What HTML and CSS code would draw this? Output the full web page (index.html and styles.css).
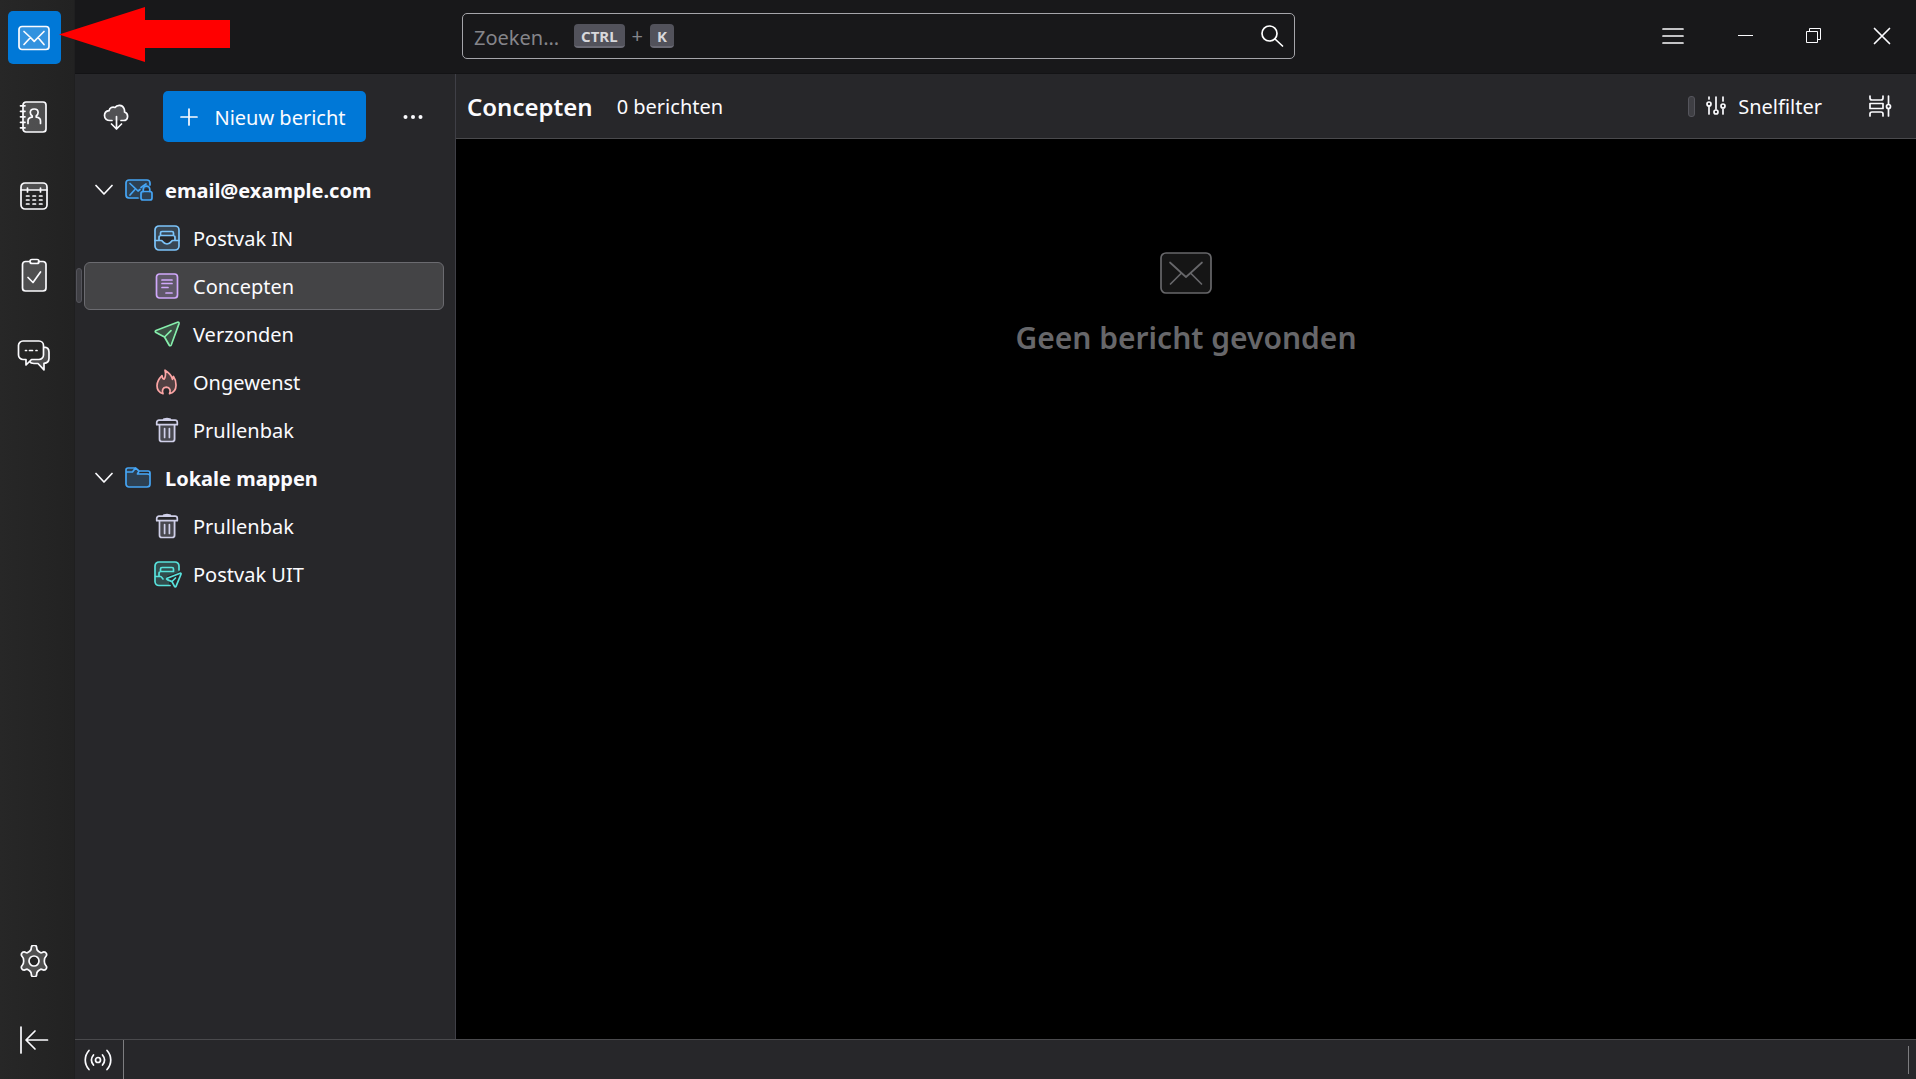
FILE: index.html
```html
<!DOCTYPE html>
<html lang="nl">
<head>
<meta charset="utf-8">
<meta name="viewport" content="width=device-width, initial-scale=1">
<title>Concepten</title>
<link rel="stylesheet" href="styles.css">
</head>
<body class="app">
<svg class="sprite" aria-hidden="true">
  <symbol id="trash" viewBox="0 0 26 26">
    <path class="tint" d="M4 7.500h18v14.500a3 3 0 0 1-3 3h-11a3 3 0 0 1-3-3V7.500z"/>
    <path d="M5.500 8v14.200a2.300 2.300 0 0 0 2.300 2.300h10.400a2.300 2.300 0 0 0 2.300-2.300V8M5 3.200h16a2.300 2.300 0 0 1 2.300 2.300V7.700H2.700V5.500A2.300 2.300 0 0 1 5 3.200zM9.500 2.500c.5-1.300 6.500-1.300 7 0M10.600 11.500v9M15.400 11.500v9"/>
  </symbol>
  <symbol id="chevron" viewBox="0 0 18 12"><path d="M1 1.500l8 8.500 8-8.500"/></symbol>
</svg>

<nav class="rail" aria-label="Ruimten">
  <button class="rail-button active" aria-label="E-mail">
    <svg class="icon" width="32" height="32" viewBox="0 0 32 32"><rect class="tint" x="1" y="4.500" width="30" height="23" rx="3"/><rect x="1" y="4.500" width="30" height="23" rx="3"/><path d="M6 9.500l6.500 6 3.700 3.800 3.800-3.800 6-6M6 22.500l6.500-7M26 22.500l-6-7"/></svg>
  </button>
  <button class="rail-button" aria-label="Adresboek">
    <svg class="icon" width="32" height="32" viewBox="0 0 32 32"><rect class="tint" x="5" y="1" width="23" height="30" rx="3"/><rect x="5" y="1" width="23" height="30" rx="3"/><path d="M2.500 4.800h4.500M2.500 10.300h4.500M2.500 15.800h4.500M2.500 21.300h4.500M2.500 26.800h4.500M10 22.500v-2.500c0-2.300 2-3.500 4.200-3.800v-1.200c-1.500-1-1.900-2.200-1.900-3.500 0-2.200 1.700-3.500 3.900-3.500s3.900 1.300 3.900 3.500c0 1.300-.4 2.500-1.900 3.500v1.200c2.200.3 4.300 1.500 4.300 3.800v2.500"/></svg>
  </button>
  <button class="rail-button" aria-label="Agenda">
    <svg class="icon" width="32" height="32" viewBox="0 0 32 32"><path class="tint" d="M3 10V7a4 4 0 0 1 4-4h18a4 4 0 0 1 4 4v3z"/><rect x="3" y="3" width="26" height="26" rx="4"/><path d="M3 10h26M9.500 8v4M22.500 8v4"/><path d="M8.500 16h2.500M15 16h2.500M21.500 16h2.500M8.500 20h2.500M15 20h2.500M21.500 20h2.500M8.500 24h2.500M15 24h2.500M21.500 24h2.500"/></svg>
  </button>
  <button class="rail-button" aria-label="Taken">
    <svg class="icon" width="32" height="34" viewBox="0 0 32 34"><rect class="tint" x="4.500" y="3.500" width="23.500" height="29.500" rx="3"/><path d="M12 3.500H7.500a3 3 0 0 0-3 3V30a3 3 0 0 0 3 3H25a3 3 0 0 0 3-3V6.500a3 3 0 0 0-3-3h-4.500M14 1.500h5a1.500 1.500 0 0 1 0 4h-5a1.500 1.500 0 0 1 0-4zM10 19.500l5 5L22.500 14"/></svg>
  </button>
  <button class="rail-button" aria-label="Chat">
    <svg class="icon" width="34" height="38" viewBox="0 -4 34 38"><path class="tint" d="M27 8.500c3 0 5 2 5 5v5.500c0 3-2 4.500-5 5v6l-6-6h-4c-2 0-3.500-.5-4.300-2l2-1.500h7.800a4 4 0 0 0 4-4z"/><path d="M6 2h16a4.500 4.500 0 0 1 4.500 4.500v9.500a4.500 4.500 0 0 1-4.500 4.500h-7.500L9 26v-5.500H6A4.500 4.500 0 0 1 1.500 16V6.500A4.500 4.500 0 0 1 6 2zM27 8.200c3 .1 5 2 5 5v6c0 3-2 4.800-5 5.200v6.400l-6-6.300h-4c-2 0-3.500-.5-4.500-2M8.500 11.500h1M12.500 11.500h3M19 11.500h1"/></svg>
  </button>
  <button class="rail-button rail-end" aria-label="Instellingen">
    <svg class="icon" width="32" height="32" viewBox="0 0 32 32"><g transform="translate(0 -1)"><path class="gear" d="M13.300 3.800a2.700 2.700 0 0 1 5.400 0c0 2.800 1.200 3.500 4 5 1 .4 1.700-.9 3.200-.9a2.700 2.700 0 0 1 2.200 4.300c-1.200 1-1.800 1.300-1.800 4.800s.6 3.800 1.800 4.800a2.700 2.700 0 0 1-2.200 4.300c-1.500 0-2.200-1.300-3.200-.9-2.800 1.500-4 2.200-4 5a2.700 2.700 0 0 1-5.400 0c0-2.800-1.200-3.500-4-5-1-.4-1.700.9-3.200.9a2.700 2.700 0 0 1-2.200-4.300c1.200-1 1.800-1.300 1.800-4.800s-.6-3.800-1.800-4.800a2.700 2.700 0 0 1 2.200-4.300c1.500 0 2.200 1.300 3.200.9 2.800-1.500 4-2.200 4-5z"/><circle class="hole" cx="16" cy="17" r="5"/></g></svg>
  </button>
  <button class="rail-button" aria-label="Werkbalk inklappen">
    <svg class="icon" width="32" height="32" viewBox="0 0 32 32"><path d="M3 3v26M29.500 16H9M17 7l-9 9 9 9"/></svg>
  </button>
</nav>

<header class="titlebar">
  <form class="search" role="search">
    <input class="search-input" type="search" placeholder="Zoeken..." aria-label="Zoeken">
    <span class="search-keys"><kbd>CTRL</kbd><span>+</span><kbd>K</kbd></span>
    <button class="search-button" type="button" aria-label="Zoeken">
      <svg class="icon" width="24" height="24" viewBox="0 0 24 24"><circle cx="9.500" cy="9.500" r="7.500"/><path d="M15 15l7.500 7"/></svg>
    </button>
  </form>
  <div class="window-buttons">
    <button class="menu-button" aria-label="Menu"><svg class="icon" width="22" height="18" viewBox="0 0 22 18"><path d="M1 2h20M1 9h20M1 16h20"/></svg></button>
    <button class="window-button" aria-label="Minimaliseren"><svg class="icon crisp" width="16" height="16" viewBox="0 0 16 16"><path d="M0 7.500h15"/></svg></button>
    <button class="window-button" aria-label="Herstellen"><svg class="icon crisp" width="16" height="16" viewBox="0 0 16 16"><path d="M.5 3.500h11v11H.5zM3.500 3.500v-3h11v11h-3"/></svg></button>
    <button class="window-button" aria-label="Sluiten"><svg class="icon" width="18" height="18" viewBox="0 0 18 18"><path d="M1.500 1.500l15 15M16.500 1.500l-15 15"/></svg></button>
  </div>
</header>

<aside class="folders">
  <div class="folder-tools">
    <button class="tool" aria-label="Berichten ophalen">
      <svg class="icon" width="26" height="26" viewBox="0 0 26 26"><path class="tint" d="M7 16.500c-3 0-5.500-1.500-5.500-5 0-3 2-4.500 4.500-4.800C7.500 3.500 9.500 2.500 12 3c2-2 7-2.500 9 1.500.7 1.300.7 2.500.5 3.500 4 1 4.500 7.500-1 8.500z"/><path d="M9 16.500H7c-3 0-5.500-1.500-5.500-5 0-3 2-4.500 4.500-4.800.7-3.200 3.500-4.200 6-3.200 2-3 7.500-3 9 1 .5 1.300.7 2.500.5 3.500 4.500 1.500 4 8.500-1 8.500H18M13.500 12.500V25M8.500 20l5 5 5-5"/></svg>
    </button>
    <button class="compose">
      <svg class="icon" width="18" height="18" viewBox="0 0 18 18"><path d="M9 1v16M1 9h16"/></svg>
      <span class="label">Nieuw bericht</span>
    </button>
    <button class="tool" aria-label="Meer opties">
      <svg class="icon" width="20" height="6" viewBox="0 0 20 6"><g class="dots"><circle cx="2.500" cy="3" r="2"/><circle cx="10" cy="3" r="2"/><circle cx="17.500" cy="3" r="2"/></g></svg>
    </button>
  </div>
  <ul class="tree">
    <li>
      <a class="row account" href="#">
        <svg class="icon chevron" width="18" height="12"><use href="#chevron"/></svg>
        <svg class="icon blue" width="28" height="24" viewBox="0 0 28 24"><path class="tint" d="M4 2h18a3 3 0 0 1 3 3v5l-5 1-3 6v4H4a3 3 0 0 1-3-3V5a3 3 0 0 1 3-3z"/><path d="M25 7V5a3 3 0 0 0-3-3H4a3 3 0 0 0-3 3v12a3 3 0 0 0 3 3h9M5 5.500l8 7.500 2-1.500M21 6l-5 3.500M5 17l4.500-5"/><rect class="tint" x="16" y="13.500" width="11" height="8.500" rx="2"/><rect x="16" y="13.500" width="11" height="8.500" rx="2"/><path d="M18.200 13.500v-2a3.300 3.300 0 0 1 6.600 0v2"/></svg>
        <span class="label">email@example.com</span>
      </a>
      <ul class="branch">
        <li><a class="row" href="#">
          <svg class="icon sky" width="26" height="26" viewBox="0 0 26 26"><path class="tint" fill-rule="evenodd" d="M4 1h18a3 3 0 0 1 3 3v18a3 3 0 0 1-3 3H4a3 3 0 0 1-3-3V4a3 3 0 0 1 3-3zM6 11v4h2c1 0 1 4 5 4s4-4 5-4h2v-4z"/><rect x="1" y="1" width="24" height="24" rx="4"/><path d="M1 15.500h6.500c1.200 0 1.500 3.500 5.500 3.500s4.300-3.500 5.500-3.500H25M5 15v-2.500a2 2 0 0 1 2-2h12a2 2 0 0 1 2 2V15M6.500 10.500V8a1.500 1.500 0 0 1 1.500-1.500h10A1.500 1.500 0 0 1 19.500 8v2.500"/></svg>
          <span class="label">Postvak IN</span></a></li>
        <li><a class="row selected" href="#" aria-current="page">
          <svg class="icon violet" width="26" height="26" viewBox="0 0 26 26"><rect class="tint" x="2.500" y="1" width="21" height="24" rx="3"/><rect x="2.500" y="1" width="21" height="24" rx="3"/><path d="M8 7h10M8 10.500h10M8 14.500h6M12 20h6"/></svg>
          <span class="label">Concepten</span></a></li>
        <li><a class="row" href="#">
          <svg class="icon green" width="26" height="26" viewBox="0 0 26 26"><path class="tint" d="M24.700 1.300L1.500 10.500c-.5.200-.5.800 0 1L10 16l4.500 8.500c.3.600 1 .6 1.300 0z"/><path d="M23.500 1.200L2 9.500c-1 .5-1 1.400 0 1.900L10.500 16l4.600 8c.6 1 1.700 1 2.100 0L25 2.600c.3-1-.5-1.800-1.500-1.400zM10.500 16l6.500-6.300"/></svg>
          <span class="label">Verzonden</span></a></li>
        <li><a class="row" href="#">
          <svg class="icon coral" width="26" height="26" viewBox="0 0 26 26"><path class="tint" d="M11 1c1 4 .5 7-1 9-1.500-.5-1.800-1.800-2-3.500-3 3-5 6-5 10 0 4.500 3 7.500 6.500 8.500-1-3.500 1-6 3.500-6.500 2.500.5 4 3 3 6.500 4-1 6.500-4.500 6.500-9 0-7-7.500-8.500-11.500-15z"/><path d="M11 1.200c1 4 .5 7-1 9-1.500-.5-1.800-1.800-2-3.500-3 3-5 6-5 10 0 4 2.500 7 6 8-1.300-3.200-.5-6.200 3.300-6.500 3.700.3 4.700 3.300 3.200 6.500 4-1 6.500-4 6.500-8.500 0-4-1-6.700-2.500-8.700 0 1.200-.3 2-1 2.800-.5-4-4-6.800-7.500-9.100z"/></svg>
          <span class="label">Ongewenst</span></a></li>
        <li><a class="row" href="#"><svg class="icon lilac" width="26" height="26"><use href="#trash"/></svg><span class="label">Prullenbak</span></a></li>
      </ul>
    </li>
    <li>
      <a class="row account" href="#">
        <svg class="icon chevron" width="18" height="12"><use href="#chevron"/></svg>
        <svg class="icon blue" width="28" height="24" viewBox="0 0 28 24"><path class="tint" d="M1 3h9l4 4h8a3 3 0 0 1 3 3v8a3 3 0 0 1-3 3H4a3 3 0 0 1-3-3z"/><path d="M1 5.500V4a2 2 0 0 1 2-2h7.500l3.500 3h9a2 2 0 0 1 2 2v11a3 3 0 0 1-3 3H4a3 3 0 0 1-3-3zM1 6h6.500L10.500 2M14 5l-1.500 3H22c1.500 0 3 .5 3 2"/></svg>
        <span class="label">Lokale mappen</span>
      </a>
      <ul class="branch">
        <li><a class="row" href="#"><svg class="icon lilac" width="26" height="26"><use href="#trash"/></svg><span class="label">Prullenbak</span></a></li>
        <li><a class="row" href="#">
          <svg class="icon teal" width="26" height="26" viewBox="0 0 26 26"><path class="tint" d="M4 1h18a3 3 0 0 1 3 3v7L13 15l2 4v6H4a3 3 0 0 1-3-3V4a3 3 0 0 1 3-3z"/><path d="M25 9V5a4 4 0 0 0-4-4H5a4 4 0 0 0-4 4v15.500a4 4 0 0 0 4 4h11M1 15.500h5.500c1.200 0 1.500 1.500 2.500 2.500M5 15v-2.500a2 2 0 0 1 2-2h12M6.500 10.500V8A1.500 1.500 0 0 1 8 6.500h10A1.500 1.500 0 0 1 19.500 8v2.500M26 12.200l-12.800 5c-.8.400-.8 1 0 1.400l4.800 2 2.500 4.800c.4.800 1.200.8 1.500 0l5-12.200c.3-.8-.2-1.300-1-1zM18 20.500l3.500-3.500"/></svg>
          <span class="label">Postvak UIT</span></a></li>
      </ul>
    </li>
  </ul>
  <span class="grip folder-grip"></span>
</aside>

<main class="messages">
  <div class="message-bar">
    <h1 class="folder-name">Concepten</h1>
    <span class="label">0 berichten</span>
    <span class="grip filter-grip"></span>
    <button class="filter">
      <svg class="icon" width="20" height="20" viewBox="0 0 20 20"><path d="M3 1v2M3 10v8M10 1v12M17 1v4M17 13v5"/><circle cx="3" cy="8" r="2"/><circle cx="10" cy="16" r="2"/><circle cx="17" cy="10" r="2"/></svg>
      <span class="label">Snelfilter</span>
    </button>
    <button class="display" aria-label="Weergaveopties">
      <svg class="icon" width="24" height="22" viewBox="0 0 24 22"><path d="M2 1v2a2 2 0 0 0 2 2h9a2 2 0 0 0 2-2V1M2 21v-2a2 2 0 0 1 2-2h9a2 2 0 0 1 2 2v2M2 8.500h13v5H2zM20.500 1v8M20.500 14v7"/><circle cx="20.500" cy="11.500" r="2"/></svg>
    </button>
  </div>
  <div class="empty">
    <svg class="icon" width="52" height="42" viewBox="0 0 52 42"><rect class="tint" x="1" y="1" width="50" height="40" rx="5"/><rect x="1" y="1" width="50" height="40" rx="5"/><path d="M10 10.500l11.500 10.500 4.500 4 4.500-4L42 10.500M10.500 32l11-11M41.500 32l-11-11"/></svg>
    <p>Geen bericht gevonden</p>
  </div>
</main>

<footer class="status">
  <button class="online" aria-label="Verbindingsstatus">
    <svg class="icon" width="28" height="22" viewBox="0 0 28 22"><circle cx="14" cy="11" r="2.500"/><path d="M9.500 6c-2.500 3-2.500 7 0 10M18.500 6c2.500 3 2.500 7 0 10M5 1.500c-5 5.500-5 13.500 0 19M23 1.500c5 5.500 5 13.500 0 19"/></svg>
  </button>
  <span class="status-end"></span>
</footer>

<svg class="arrow" width="171" height="56" viewBox="0 0 171 56" aria-hidden="true"><path d="M0 27.500L86 0v13h85v28H86v14z"/></svg>
</body>
</html>
```

FILE: styles.css
```css
* {
  box-sizing: border-box;
}

.app {
  margin: 0;
  min-height: 100vh;
  display: grid;
  grid-template-columns: 75px 381px minmax(0, 1fr);
  grid-template-rows: 74px minmax(0, 1fr) 40px;
  background: #27272a;
  color: #fbfbfe;
  font: 20px/28px "Noto Sans", "Open Sans", sans-serif;
}

button {
  display: flex;
  align-items: center;
  justify-content: center;
  margin: 0;
  padding: 0;
  border: 0;
  background: none;
  color: inherit;
  font: inherit;
}

.sprite {
  position: absolute;
  width: 0;
  height: 0;
}

.icon {
  flex: none;
  fill: none;
  stroke: currentColor;
  stroke-width: 1.7;
  stroke-linecap: round;
  stroke-linejoin: round;
}

.label { padding-top: 2px; }

.tint {
  fill: currentColor;
  fill-opacity: 0.2;
  stroke: none;
}

.crisp {
  stroke-width: 1;
  stroke-linecap: butt;
  stroke-linejoin: miter;
}

.gear { fill: #505050; }
.hole { fill: #242424; }
.dots { fill: currentColor; stroke: none; }

/* Spaces rail */
.rail {
  grid-row: 1 / 4;
  display: flex;
  flex-direction: column;
  gap: 26px;
  padding: 11px 8px 13px;
  border-right: 1px solid #1f1f20;
  background: linear-gradient(90deg, #272727, #222222);
}

.rail-button {
  width: 53px;
  height: 53px;
  padding-right: 1px;
  border-radius: 5px;
}

.rail-button.active { background: #0078d7; }
.rail-end { margin-top: auto; }

/* Title bar */
.titlebar {
  grid-column: 2 / 4;
  display: flex;
  justify-content: space-between;
  align-items: flex-start;
  padding-left: 387px;
  border-bottom: 1px solid #131315;
  background: #18181a;
}

.search {
  position: relative;
  flex: 0 1 833px;
  margin-top: 13px;
}

.search-input {
  display: block;
  width: 100%;
  height: 46px;
  padding: 2px 60px 0 11px;
  border: 1px solid #a5a5aa;
  border-radius: 5px;
  background: transparent;
  color: inherit;
  font: inherit;
  appearance: none;
}

.search-input::placeholder {
  color: #85858a;
  opacity: 1;
}

.search-keys {
  position: absolute;
  left: 112px;
  top: 11px;
  display: flex;
  align-items: center;
  gap: 7px;
  line-height: 24px;
  color: #85858a;
}

kbd {
  height: 24px;
  padding: 0 7px;
  border-bottom: 2px solid #6a6a74;
  border-radius: 4px;
  background: #52525b;
  color: #d8d8dc;
  font: bold 15px/24px "Noto Sans", "Open Sans", sans-serif;
}

.search-button {
  position: absolute;
  right: 11px;
  top: 11px;
  color: #ffffff;
}

.window-buttons {
  display: flex;
  height: 72px;
}

.menu-button {
  width: 50px;
  margin-right: 14px;
}

.window-button { width: 68px; }

/* Folder pane */
.folders {
  position: relative;
  padding: 17px 11px 0 9px;
  border-right: 1px solid #3f3f46;
}

.folder-tools {
  display: flex;
  align-items: center;
  justify-content: space-between;
  height: 51px;
  padding: 0 10px 0 11px;
}

.tool {
  width: 42px;
  height: 42px;
}

.compose {
  width: 203px;
  height: 51px;
  gap: 16px;
  padding-right: 3px;
  border-radius: 5px;
  background: #0078d7;
}

.tree,
.branch {
  margin: 0;
  padding: 0;
  list-style: none;
}

.tree { margin-top: 24px; }

.row {
  display: flex;
  align-items: center;
  gap: 13px;
  height: 48px;
  padding-left: 69px;
  border: 1px solid transparent;
  border-radius: 6px;
  color: inherit;
  text-decoration: none;
}

.branch .icon { overflow: visible; }

.account {
  gap: 12px;
  padding-left: 10px;
  font-weight: bold;
}

.selected {
  border-color: #6b6b70;
  background: #444446;
}

.blue { color: #45a5f5; }
.sky { color: #7cc4fa; }
.violet { color: #d0a8fb; }
.green { color: #86efac; }
.coral { color: #fca5a5; }
.lilac { color: #cfcfe8; }
.teal { color: #58e2dc; }

.grip {
  border: 1px solid #55555c;
  border-radius: 3px;
  background: #3f3f44;
}

.folder-grip {
  position: absolute;
  left: 1px;
  top: 194px;
  width: 6px;
  height: 35px;
}

/* Message list */
.messages {
  display: flex;
  flex-direction: column;
  background: #000000;
}

.message-bar {
  display: flex;
  align-items: center;
  height: 65px;
  padding: 0 24px 0 11px;
  border-bottom: 1px solid #4a4a4d;
  background: #27272a;
}

.folder-name {
  margin: 0 24px 0 0;
  padding-top: 2px;
  font-size: 24px;
  font-weight: 600;
}

.filter-grip {
  width: 7px;
  height: 21px;
  margin-left: auto;
}

.filter {
  gap: 12px;
  margin: 0 46px 0 11px;
}

.empty {
  display: flex;
  flex-direction: column;
  align-items: center;
  gap: 22px;
  padding-top: 113px;
  color: #67676a;
}

.empty p {
  margin: 0;
  font-size: 30px;
  line-height: 44px;
  font-weight: 600;
}

/* Status bar */
.status {
  grid-column: 2 / 4;
  display: flex;
  justify-content: space-between;
  align-items: center;
  padding-right: 7px;
  border-top: 1px solid #4a4a4d;
}

.online {
  align-self: stretch;
  width: 49px;
  padding-right: 2px;
  border-right: 1px solid #7d7d80;
}

.status-end {
  width: 1px;
  height: 28px;
  background: #7d7d80;
}

/* Pointer laid over the rail and title bar */
.arrow {
  position: absolute;
  left: 59px;
  top: 7px;
  fill: #ff0000;
}
```
